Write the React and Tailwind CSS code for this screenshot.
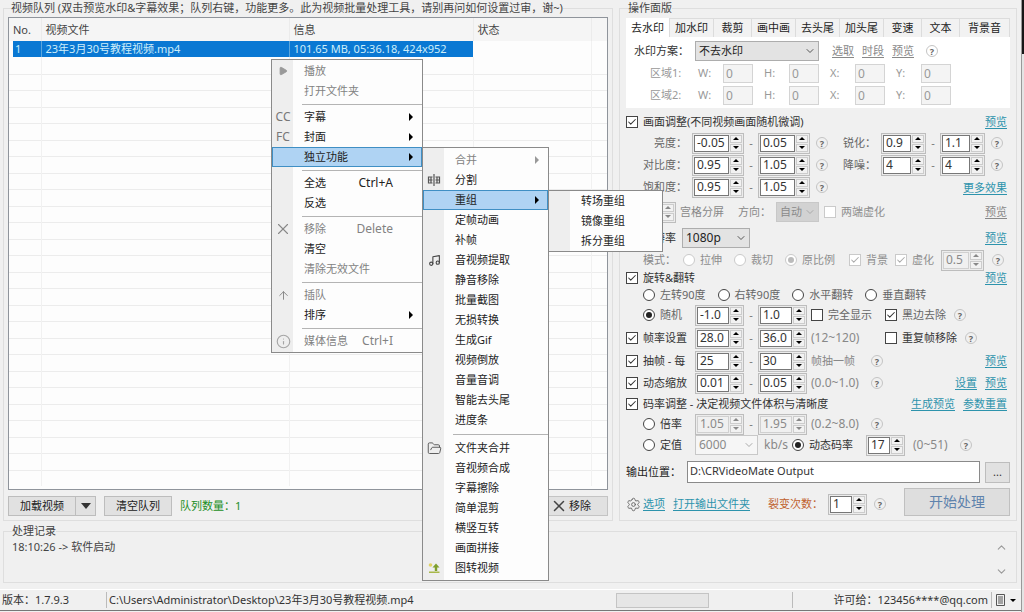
import React, { useState } from "react";
import { Check, ChevronDown, ChevronUp, FolderOpen, Info, Music, Play, ArrowUp, X, Settings } from "lucide-react";

const TABS = ["去水印", "加水印", "裁剪", "画中画", "去头尾", "加头尾", "变速", "文本", "背景音"];
const AREA_FIELDS = ["W:", "H:", "X:", "Y:"];
const COLUMNS = ["No.", "视频文件", "信息", "状态", ""];

const SplitIcon = () => (
    <svg viewBox="0 0 14 12" className="w-[14px] h-3" fill="none" stroke="#555" strokeWidth="1.2">
        <path d="M5.5 3H1.5v6h4M8.5 3h4v6h-4M7 0v12M1.5 6h4M8.5 6h4M4 3v6M10 3v6" />
    </svg>
);

const PictureIcon = () => (
    <svg viewBox="0 0 12 12" className="size-3">
        <circle cx="2.5" cy="3" r="1.8" fill="#e0d264" />
        <path d="M8 1.5 11.5 5.5H9.2V9H6.8V5.5H4.5z" fill="#7f9f2c" />
        <path d="M1 9.5h10.5V11H1z" fill="#a9b94a" />
    </svg>
);

const LogIcon = () => (
    <svg viewBox="0 0 11 12" className="h-3 w-[11px]" fill="none" stroke="#555">
        <path d="M1.5 .5h8v11h-8zM3 3h5M3 5h5M3 7h5M3 9h5" />
    </svg>
);

const REORG_MENU = [{ text: "转场重组" }, { text: "镜像重组" }, { text: "拆分重组" }];

const FUNC_MENU = [
    { text: "合并", arrow: true, off: true },
    { text: "分割", icon: <SplitIcon /> },
    { text: "重组", arrow: true, open: true, sub: REORG_MENU, subWidth: "w-[115px]" },
    { text: "定帧动画" },
    { text: "补帧" },
    { text: "音视频提取", icon: <Music size={13} color="#444" /> },
    { text: "静音移除" },
    { text: "批量截图" },
    { text: "无损转换" },
    { text: "生成Gif" },
    { text: "视频倒放" },
    { text: "音量音调" },
    { text: "智能去头尾" },
    { text: "进度条" },
    { sep: true, tall: true },
    { text: "文件夹合并", icon: <FolderOpen size={15} strokeWidth={1.5} color="#555" /> },
    { text: "音视频合成" },
    { text: "字幕擦除" },
    { text: "简单混剪" },
    { text: "横竖互转" },
    { text: "画面拼接" },
    { text: "图转视频", icon: <PictureIcon /> },
];

const QUEUE_MENU = [
    { text: "播放", off: true, icon: <Play size={10} fill="#999" color="#999" /> },
    { text: "打开文件夹", off: true },
    { sep: true },
    { text: "字幕", icon: "CC", arrow: true },
    { text: "封面", icon: "FC", arrow: true },
    { text: "独立功能", arrow: true, open: true, sub: FUNC_MENU, subWidth: "w-[127px]" },
    { sep: true },
    { text: "全选", keys: "Ctrl+A" },
    { text: "反选" },
    { sep: true },
    { text: "移除", keys: "Delete", off: true, icon: <X size={18} strokeWidth={1.5} color="#888" /> },
    { text: "清空" },
    { text: "清除无效文件", off: true },
    { sep: true },
    { text: "插队", off: true, icon: <ArrowUp size={13} strokeWidth={1.8} color="#888" /> },
    { text: "排序", arrow: true },
    { sep: true },
    { text: "媒体信息", keys: "Ctrl+I", off: true, icon: <Info size={15} strokeWidth={1.8} color="#a5a5a5" /> },
];

const Menu = ({ items, className }) => (
    <ul className={`absolute z-20 border border-[#8a8a8a] bg-[linear-gradient(to_right,#eeeeee_21px,#fdfdfd_21px)] ${className}`}>
        {items.map((item, i) =>
            item.sep ? (
                <li key={i} className={`flex items-center pl-[30px] ${item.tall ? "h-2" : "h-[6px]"}`}>
                    <hr className="w-full border-[#b4b4b4]" />
                </li>
            ) : (
                <li key={i} className="relative">
                    <button
                        className={`flex h-5 w-full items-center border text-left ${item.open ? "border-[#3f8fc4] bg-[#afd3f3]" : "border-transparent"} ${item.off ? "text-[#828282]" : "text-[#222]"}`}
                    >
                        <span className="flex w-5 shrink-0 justify-center text-xs text-[#777]">{item.icon}</span>
                        <span className="ml-[11px] flex-1 whitespace-nowrap">{item.text}</span>
                        {item.keys && <span className="mr-7 text-xs">{item.keys}</span>}
                        {item.arrow && (
                            <svg viewBox="0 0 4 8" className="mr-2 h-2 w-1" fill={item.off ? "#999" : "#000"}>
                                <path d="M0 0l4 4-4 4z" />
                            </svg>
                        )}
                    </button>
                    {item.sub && <Menu items={item.sub} className={`left-full top-0 ${item.subWidth} ${item.sub.length > 5 ? "py-[2px]" : ""}`} />}
                </li>
            )
        )}
    </ul>
);

const Choice = ({ type = "checkbox", name, on, off, muted, className = "", children }) => (
    <label className={`relative flex shrink-0 items-center gap-[5px] whitespace-nowrap ${off ? "text-[#8e8e8e]" : muted ? "text-[#666]" : "text-[#333]"} ${className}`}>
        <input
            type={type}
            name={name}
            defaultChecked={on}
            disabled={off}
            className={`peer grid size-3 shrink-0 appearance-none place-content-center border bg-white ${off ? "border-[#cacaca]" : "border-[#444]"} ${
                type === "radio" ? `rounded-full before:size-[6px] before:rounded-full ${off ? "checked:before:bg-[#bbb]" : "checked:before:bg-[#222]"}` : ""
            }`}
        />
        {type === "checkbox" && (
            <Check size={10} strokeWidth={2.5} color={off ? "#aaa" : "#333"} className="pointer-events-none absolute left-px hidden peer-checked:block" />
        )}
        <span>{children}</span>
    </label>
);

const Arrow = ({ down, off }) => (
    <svg viewBox="0 0 6 3" className="h-[3px] w-[6px]" fill={off ? "#888" : "#000"}>
        <path d={down ? "M0 0h6L3 3z" : "M0 3h6L3 0z"} />
    </svg>
);

const Spin = ({ value, label, off, className = "w-[49px]" }) => (
    <span className={`flex h-[21px] shrink-0 gap-px border border-[#bdbdbd] bg-[#ececec] p-px ${className}`}>
        <input
            aria-label={label}
            defaultValue={value}
            disabled={off}
            className={`min-w-0 flex-1 border pl-[2px] text-xs leading-4 ${off ? "border-[#d0d0d0] bg-[#f0f0f0] text-[#8a8a8a]" : "border-[#777] bg-white text-[#333]"}`}
        />
        <span className="flex w-3 shrink-0 flex-col gap-px">
            <button aria-label={`${label}+`} disabled={off} className="flex flex-1 items-center justify-center border border-[#ccc] bg-[#f2f2f2]"><Arrow off={off} /></button>
            <button aria-label={`${label}-`} disabled={off} className="flex flex-1 items-center justify-center border border-[#ccc] bg-[#f2f2f2]"><Arrow down off={off} /></button>
        </span>
    </span>
);

const Range = ({ from, to, label, off, className }) => (
    <>
        <Spin value={from} label={`${label} min`} off={off} className={className} />
        <span className="w-[14px] shrink-0 text-center text-[#777]">-</span>
        <Spin value={to} label={`${label} max`} off={off} className={className} />
    </>
);

const Help = ({ className = "" }) => (
    <button aria-label="help" className={`flex size-3 shrink-0 items-center justify-center rounded-full border border-[#c4c4c4] text-[9px] font-bold leading-none text-[#666] ${className}`}>?</button>
);

const Link = ({ children, gray, className = "" }) => (
    <a href="#" className={`shrink-0 whitespace-nowrap underline underline-offset-2 ${gray ? "text-[#888]" : "text-[#2d93ac]"} ${className}`}>{children}</a>
);

const Select = ({ options, label, off, className = "" }) => (
    <span className={`relative flex shrink-0 items-center border ${off ? "border-[#c8c8c8] text-[#8a8a8a]" : "border-[#adadad] bg-[#e3e3e3] text-[#222]"} ${className}`}>
        <select aria-label={label} disabled={off} className="w-full appearance-none bg-transparent px-[3px]">
            {options.map((o) => <option key={o}>{o}</option>)}
        </select>
        <ChevronDown size={12} strokeWidth={2} color={off ? "#aaa" : "#555"} className="pointer-events-none absolute right-[2px]" />
    </span>
);

const Row = ({ className, children }) => <div className={`flex items-center ${className}`}>{children}</div>;

const AdjustRow = ({ name, from, to, right, rightFrom, rightTo }) => (
    <Row className="h-[22px] text-[#666]">
        <span className="w-[66px] shrink-0 pr-[5px] text-right">{name}：</span>
        <Range from={from} to={to} label={name} className="w-[52px]" />
        <Help className="mx-[6px]" />
        {right && (
            <>
                <span className="w-[47px] shrink-0 pr-[5px] text-right">{right}：</span>
                <Range from={rightFrom} to={rightTo} label={right} className="w-[45px]" />
                <Help className="mx-[6px]" />
            </>
        )}
    </Row>
);

const WatermarkTab = () => (
    <div className="h-[71px] bg-white pt-[3px]">
        <Row className="h-[22px]">
            <label className="w-[69px] shrink-0 pl-2 text-[#333]">水印方案：</label>
            <Select options={["不去水印"]} label="水印方案" className="h-5 w-[124px]" />
            <Link gray className="ml-[13px]">选取</Link>
            <Link gray className="ml-2">时段</Link>
            <Link gray className="ml-2">预览</Link>
            <Help className="ml-3" />
        </Row>
        {["区域1:", "区域2:"].map((area) => (
            <Row key={area} className="h-[22px] text-[#999]">
                <span className="w-[72px] shrink-0 pl-6">{area}</span>
                {AREA_FIELDS.map((f) => (
                    <label key={f} className="flex w-[66px] items-center">
                        <span className="w-[25px] shrink-0">{f}</span>
                        <input defaultValue="0" disabled className="h-[19px] w-[30px] border border-[#d4d4d4] bg-[#f4f4f4] pl-[2px] text-xs leading-4" />
                    </label>
                ))}
            </Row>
        ))}
    </div>
);

const OptionPanel = () => {
    const [tab, setTab] = useState(TABS[0]);

    return (
        <fieldset className="w-[398px] shrink-0 border border-[#dedede] px-[6px]">
            <legend className="ml-[2px] leading-4">操作面版</legend>
            <div className="flex h-[21px] pt-[2px]">
                {TABS.map((t) => (
                    <button
                        key={t}
                        onClick={() => setTab(t)}
                        className={`border-r border-[#dcdcdc] text-[#222] last:flex-1 ${t.length > 2 ? "w-11" : "w-[38px]"} ${tab === t ? "bg-white" : "border-t bg-[#f2f2f2]"}`}
                    >
                        {t}
                    </button>
                ))}
            </div>
            <WatermarkTab />

            <Row className="mt-1 h-5 pr-[3px]">
                <Choice on>画面调整(不同视频画面随机微调)</Choice>
                <Link className="ml-auto">预览</Link>
            </Row>
            <AdjustRow name="亮度" from="-0.05" to="0.05" right="锐化" rightFrom="0.9" rightTo="1.1" />
            <AdjustRow name="对比度" from="0.95" to="1.05" right="降噪" rightFrom="4" rightTo="4" />
            <div className="relative">
                <AdjustRow name="饱和度" from="0.95" to="1.05" />
                <Link className="absolute right-[3px] top-1">更多效果</Link>
            </div>
            <Row className="h-7 pr-[3px] text-[#888]">
                <Spin value="9" label="宫格" off className="w-[50px]" />
                <span className="ml-1 w-[58px] shrink-0">宫格分屏</span>
                <span className="w-[38px] shrink-0">方向：</span>
                <Select options={["自动"]} label="方向" off className="h-5 w-[43px] bg-[#d2d2d2]" />
                <Choice off className="ml-[5px]">两端虚化</Choice>
                <Link gray className="ml-auto">预览</Link>
            </Row>
            <Row className="h-6 pr-[3px]">
                <Choice on className="w-14">分辨率</Choice>
                <Select options={["1080p"]} label="分辨率" className="h-5 w-[68px] text-xs" />
                <Link className="ml-auto">预览</Link>
            </Row>
            <Row className="h-5 pl-[17px] text-[#888]">
                <span className="w-10 shrink-0">模式：</span>
                <Choice type="radio" name="mode" off>拉伸</Choice>
                <Choice type="radio" name="mode" off className="ml-3">裁切</Choice>
                <Choice type="radio" name="mode" on off className="ml-3">原比例</Choice>
                <Choice on off className="ml-[14px]">背景</Choice>
                <Choice on off className="mx-[7px]">虚化</Choice>
                <Spin value="0.5" label="虚化" off className="w-[43px]" />
                <Help className="ml-2" />
            </Row>

            <Row className="h-4 pr-[3px]">
                <Choice on>旋转&翻转</Choice>
                <Link className="ml-auto">预览</Link>
            </Row>
            <Row className="h-[18px] gap-3 pl-[17px]">
                <Choice type="radio" name="rotate" muted>左转90度</Choice>
                <Choice type="radio" name="rotate" muted>右转90度</Choice>
                <Choice type="radio" name="rotate" muted>水平翻转</Choice>
                <Choice type="radio" name="rotate" muted>垂直翻转</Choice>
            </Row>
            <Row className="h-[22px]">
                <Choice type="radio" name="rotate" on muted className="w-[69px] pl-[17px]">随机</Choice>
                <Range from="-1.0" to="1.0" label="随机" />
                <Choice muted className="ml-1 w-[74px]">完全显示</Choice>
                <Choice on muted>黑边去除</Choice>
                <Help className="ml-2" />
            </Row>
            <Row className="h-6">
                <Choice on className="w-[69px]">帧率设置</Choice>
                <Range from="28.0" to="36.0" label="帧率" />
                <span className="ml-1 w-[74px] shrink-0 text-xs text-[#888]">(12~120)</span>
                <Choice>重复帧移除</Choice>
                <Help className="ml-2" />
            </Row>
            <Row className="h-[22px] pr-[3px]">
                <Choice on className="w-[69px]">抽帧 - 每</Choice>
                <Range from="25" to="30" label="抽帧" />
                <span className="ml-1 w-15 shrink-0 text-[#888]">帧抽一帧</span>
                <Help />
                <Link className="ml-auto">预览</Link>
            </Row>
            <Row className="h-[22px] pr-[3px]">
                <Choice on className="w-[69px]">动态缩放</Choice>
                <Range from="0.01" to="0.05" label="缩放" />
                <span className="ml-1 w-15 shrink-0 text-xs text-[#888]">(0.0~1.0)</span>
                <Help />
                <Link className="ml-auto">设置</Link>
                <Link className="ml-2">预览</Link>
            </Row>
            <Row className="h-5 pr-[3px]">
                <Choice on>码率调整 - 决定视频文件体积与清晰度</Choice>
                <Link className="ml-auto">生成预览</Link>
                <Link className="ml-2">参数重置</Link>
            </Row>
            <Row className="h-5">
                <Choice type="radio" name="rate" className="w-[69px] pl-[17px]">倍率</Choice>
                <Range from="1.05" to="1.95" label="倍率" off />
                <span className="ml-1 w-15 shrink-0 text-xs text-[#888]">(0.2~8.0)</span>
                <Help />
            </Row>
            <Row className="h-[22px]">
                <Choice type="radio" name="rate" className="w-[69px] pl-[17px]">定值</Choice>
                <Select options={["6000"]} label="定值" off className="h-5 w-[63px] bg-[#f6f6f6] text-xs" />
                <span className="w-[34px] shrink-0 pl-[6px] text-xs text-[#888]">kb/s</span>
                <Choice type="radio" name="rate" on className="w-[74px]">动态码率</Choice>
                <Spin value="17" label="动态码率" className="w-[39px]" />
                <span className="w-[55px] shrink-0 pl-2 text-xs text-[#888]">(0~51)</span>
                <Help />
            </Row>

            <Row className="h-8">
                <label htmlFor="output" className="w-[61px] shrink-0 text-[#222]">输出位置：</label>
                <input id="output" defaultValue="D:\CRVideoMate Output" className="h-[22px] min-w-0 flex-1 border border-[#8a8a8a] bg-white px-[2px] pb-1 text-[#333]" />
                <button className="ml-[5px] h-[21px] w-[25px] border border-[#bdbdbd] bg-[#e1e1e1] text-[#333]">...</button>
            </Row>
            <Row className="h-8">
                <Settings size={15} strokeWidth={1.5} color="#666" />
                <Link className="ml-[2px]">选项</Link>
                <Link className="ml-2">打开输出文件夹</Link>
                <span className="ml-[18px] w-15 shrink-0 text-[#c0612e]">裂变次数：</span>
                <Spin value="1" label="裂变次数" className="w-[39px]" />
                <Help className="ml-[7px]" />
                <button className="mb-1 ml-auto h-7 w-[106px] border border-[#c0c0c0] bg-[#dedede] text-sm text-[#5f83ad]">开始处理</button>
            </Row>
        </fieldset>
    );
};

const QueuePanel = () => (
    <fieldset className="relative z-10 flex min-w-0 flex-1 flex-col border border-[#dedede] px-1">
        <legend className="ml-[3px] whitespace-nowrap leading-4">
            视频队列 (双击预览水印&字幕效果；队列右键，功能更多。此为视频批量处理工具，请别再问如何设置过审，谢~)
        </legend>
        <div className="mt-px flex-1 overflow-hidden border border-[#8f949b] bg-[#fdfdfd]">
            <table className="w-full table-fixed border-collapse">
                <colgroup>
                    <col className="w-8" />
                    <col className="w-[248px]" />
                    <col className="w-[184px]" />
                    <col className="w-[118px]" />
                    <col />
                </colgroup>
                <thead>
                    <tr className="h-[23px] bg-[#f5f5f5] text-left text-[#444]">
                        {COLUMNS.map((c, i) => (
                            <th key={i} className="whitespace-nowrap border-r border-[#ebebeb] py-0 pl-1 font-normal last:border-r-0">{c}</th>
                        ))}
                    </tr>
                </thead>
                <tbody>
                    <tr className="h-4 text-[#cdeefa]">
                        <td className="border-r border-[#5ba6dd] bg-[linear-gradient(to_right,#fdfdfd_4px,#0a78d3_4px)] p-0 pl-[6px] leading-4">1</td>
                        <td className="border-r border-[#5ba6dd] bg-[#0a78d3] p-0 pl-1 leading-4">23年3月30号教程视频.mp4</td>
                        <td className="bg-[#0a78d3] p-0 pl-1 leading-4">101.65 MB, 05:36.18, 424x952</td>
                        <td className="border-r border-[#f1f1f1]" />
                        <td />
                    </tr>
                    {Array.from({ length: 26 }, (_, r) => (
                        <tr key={r} className="border-b border-[#ececec] odd:h-4 even:h-[17px] last:border-b-0">
                            {COLUMNS.map((c, i) => (
                                <td key={i} className="border-r border-[#f1f1f1] p-0 last:border-r-0" />
                            ))}
                        </tr>
                    ))}
                </tbody>
            </table>
        </div>
        <div className="flex items-center pb-1 pt-[6px]">
            <button className="h-5 w-17 border border-[#bdbdbd] bg-[#e1e1e1] text-[#222]">加载视频</button>
            <button aria-label="更多" className="-ml-px flex h-5 w-[21px] items-center justify-center border border-[#bdbdbd] bg-[#e1e1e1]">
                <svg viewBox="0 0 10 6" className="h-[6px] w-[10px]" fill="#333"><path d="M0 0h10L5 6z" /></svg>
            </button>
            <button className="ml-2 h-5 w-17 border border-[#bdbdbd] bg-[#e1e1e1] text-[#222]">清空队列</button>
            <span className="ml-2 text-[#1c8f26]">队列数量：1</span>
            <button className="ml-auto flex h-5 w-[66px] items-center justify-end gap-px border border-[#c4c4c4] bg-[#e1e1e1] pr-4 text-[#222]">
                <X size={18} strokeWidth={2} color="#444" />移除
            </button>
        </div>
        <Menu items={QUEUE_MENU} className="left-[267px] top-[43px] w-[152px] py-px" />
    </fieldset>
);

const App = () => (
    <div className="flex min-h-screen bg-[#f0f0f0] font-['Noto_Sans','Noto_Sans_CJK_SC',sans-serif] text-[11px] leading-4 text-[#444]">
        <div className="flex min-w-0 flex-1 flex-col">
            <main className="flex gap-[6px] pl-[3px] pr-1">
                <QueuePanel />
                <OptionPanel />
            </main>

            <fieldset className="ml-[3px] mr-1 mt-[2px] flex min-w-0 justify-between border border-[#dedede] pl-2 pr-2">
                <legend className="leading-4">处理记录</legend>
                <p>18:10:26 -&gt; 软件启动</p>
                <div className="flex h-[43px] flex-col justify-between pb-1 pt-[2px] text-[#999]">
                    <button aria-label="up"><ChevronUp size={13} /></button>
                    <button aria-label="down"><ChevronDown size={13} /></button>
                </div>
            </fieldset>

            <footer className="mt-[6px] flex h-[22px] items-center border-b border-t border-b-[#777] border-t-white text-[#333]">
                <span className="w-[106px] pl-[2px]">版本：1.7.9.3</span>
                <span className="flex-1 border-l border-[#bbb] pl-[2px]">C:\Users\Administrator\Desktop\23年3月30号教程视频.mp4</span>
                <progress value="0" max="100" aria-label="进度" className="h-[15px] w-[93px] appearance-none border border-[#c4c4c4] bg-[#e6e6e6] [&::-webkit-progress-bar]:bg-[#e6e6e6]" />
                <span className="ml-[83px] mr-10 h-4 border-l border-[#bbb]" />
                <span>许可给：123456****@qq.com</span>
                <button aria-label="日志" className="ml-[3px] mr-[5px] flex h-4 items-center gap-1 border-l border-[#bbb] pl-[3px]">
                    <LogIcon />
                    <Arrow down />
                </button>
            </footer>
        </div>
        <div className="w-[3px] shrink-0 border-l border-[#999] bg-[#e4e4e4]">
            <div className="h-[54px] bg-[#161616]" />
        </div>
    </div>
);

export default App;
